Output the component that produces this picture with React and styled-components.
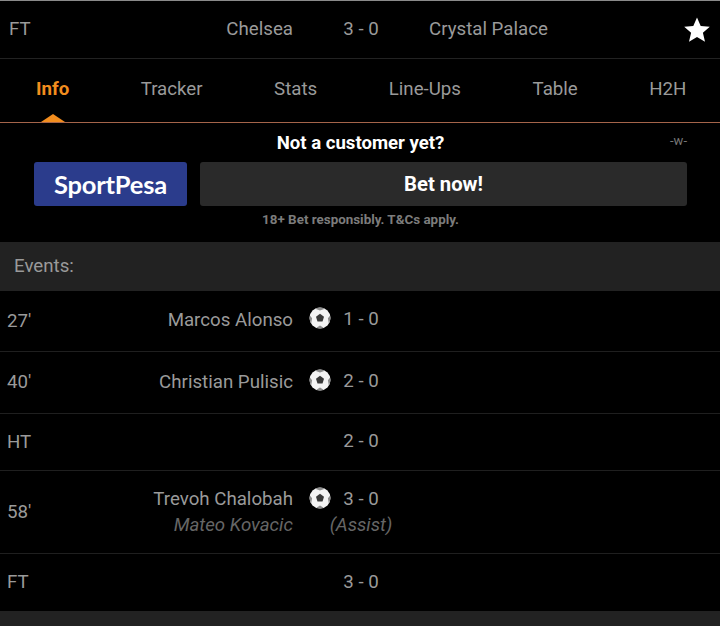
import React from "react";
import styled, { createGlobalStyle } from "styled-components";

const Global = createGlobalStyle`
  html, body { margin: 0; padding: 0; background: #000; }
  body { font-family: Roboto, "Liberation Sans", sans-serif; }
  * { box-sizing: border-box; }
`;

const Page = styled.div`
  width: 720px;
  height: 626px;
  overflow: hidden;
  background: #000;
  color: #9a9a9a;
  font-size: 18.7px;
  border-top: 1px solid #8a8a8a;
`;

const Header = styled.header`
  height: 58px;
  border-bottom: 1px solid #222;
  display: grid;
  grid-template-columns: 100px 193px 50px 36px 50px 1fr 37px;
  align-items: center;
  line-height: 52px;
  padding-bottom: 2px;
`;
const FT = styled.span`padding-left: 9px;`;
const Home = styled.span`text-align: right; white-space: nowrap;`;
const Score = styled.span`text-align: center; white-space: nowrap;`;
const StarWrap = styled.span`display: flex; align-items: center; padding-top: 3px;`;

const Tabs = styled.nav`
  height: 64px;
  display: flex;
  align-items: center;
  border-bottom: 1px solid #a5644a;
  white-space: nowrap;
  padding-left: 0.25px;
`;
const Tab = styled.div`
  position: relative;
  padding: 0 35.75px;
  height: 100%;
  line-height: 60px;
  color: ${p => (p.$active ? "#f28d1e" : "#9a9a9a")};
  font-weight: ${p => (p.$active ? 700 : 400)};
  &::after {
    content: "";
    display: ${p => (p.$active ? "block" : "none")};
    position: absolute;
    left: 50%;
    bottom: 0;
    transform: translateX(-50%);
    border-left: 12px solid transparent;
    border-right: 12px solid transparent;
    border-bottom: 8px solid #f28d1e;
  }
`;

const Ad = styled.section`
  height: 119px;
  padding: 0 33px 0 34px;
  position: relative;
  display: flex;
  flex-direction: column;
`;
const AdTitle = styled.div`
  color: #fff;
  font-weight: 700;
  font-size: 18.6px;
  text-align: center;
  height: 39px;
  line-height: 41px;
`;
const Tiny = styled.span`
  position: absolute;
  right: 33px;
  top: 10px;
  font-size: 13px;
  color: #777;
`;
const AdRow = styled.div`
  display: flex;
  gap: 13px;
  height: 44px;
`;
const Logo = styled.div`
  width: 153px;
  background: #2b3c8c;
  border-radius: 3px;
  color: #fff;
  font-family: Lato, sans-serif;
  font-weight: 700;
  font-size: 25.5px;
  letter-spacing: -0.2px;
  display: flex;
  align-items: center;
  justify-content: center;
`;
const BetButton = styled.div`
  flex: 1;
  background: #2a2a2a;
  border-radius: 3px;
  color: #fff;
  font-weight: 700;
  font-size: 20.3px;
  display: flex;
  align-items: center;
  justify-content: center;
  padding-bottom: 1px;
`;
const Disclaimer = styled.div`
  text-align: center;
  color: #7c7c7c;
  font-weight: 700;
  font-size: 13.4px;
  margin-top: 5px;
  line-height: 17px;
`;

const SectionBar = styled.div`
  height: ${p => p.$h}px;
  background: #222;
  color: #9a9a9a;
  padding-left: 14px;
  line-height: 49px;
`;

const Row = styled.div`
  height: ${p => p.$h}px;
  border-bottom: 1px solid ${p => (p.$last ? "transparent" : "#1f1f1f")};
  display: grid;
  grid-template-columns: 107px 186px 50px 36px;
  align-items: center;
`;
const Time = styled.span`padding-left: 7px; padding-bottom: 1px;`;
const NameCell = styled.div`
  text-align: right;
  white-space: nowrap;
  display: flex;
  flex-direction: column;
  gap: 4px;
  line-height: 22px;
  padding-bottom: ${p => p.$up || 0}px;
`;
const Sub = styled.span`
  font-style: italic;
  color: #666;
`;
const IconCell = styled.div`
  display: flex;
  padding-left: 16px;
  align-self: start;
  margin-top: ${p => p.$top}px;
`;
const ScoreCell = styled.div`
  display: flex;
  flex-direction: column;
  align-items: center;
  gap: 4px;
  line-height: 22px;
  white-space: nowrap;
  padding-bottom: ${p => p.$up || 0}px;
`;

const Star = () => (
  <svg width="28" height="28" viewBox="0 0 28 28">
    <path d="M14 1.500l3.700 8.400 9.100.9-6.900 6 2.100 9-8-4.800-8 4.800 2.100-9-6.900-6 9.100-.9z" fill="#fff" />
  </svg>
);

const Ball = () => (
  <svg width="22" height="22" viewBox="0 0 22 22">
    <circle cx="11" cy="11" r="10.500" fill="#f4f4f4" />
    <path d="M11 6.800l4 2.900-1.500 4.700h-5L7 9.700z" fill="#3a3a3a" />
    <path d="M11 .6c-1.800 0-3.400.4-4.800 1.200L11 3.600l4.800-1.800C14.400 1 12.800.6 11 .6zM.6 11c0 2 .6 3.800 1.600 5.400l.9-5.200L.9 8.600c-.2.8-.3 1.600-.3 2.400zM21.400 11c0-.8-.1-1.600-.3-2.400l-2.200 2.600.9 5.200c1-1.600 1.600-3.400 1.600-5.400zM7.400 20.800c1.100.4 2.300.6 3.600.6s2.500-.2 3.600-.6L11 18.600z" fill="#8c8c8c" />
  </svg>
);

const TABS = ["Info", "Tracker", "Stats", "Line-Ups", "Table", "H2H"];

export default function App() {
  return (
    <Page>
      <Global />
      <Header>
        <FT>FT</FT>
        <Home>Chelsea</Home>
        <span />
        <Score>3 - 0</Score>
        <span />
        <span>Crystal Palace</span>
        <StarWrap><Star /></StarWrap>
      </Header>
      <Tabs>
        {TABS.map((t, i) => <Tab key={t} $active={i === 0}>{t}</Tab>)}
      </Tabs>
      <Ad>
        <AdTitle>Not a customer yet?</AdTitle>
        <Tiny>-w-</Tiny>
        <AdRow>
          <Logo>SportPesa</Logo>
          <BetButton>Bet now!</BetButton>
        </AdRow>
        <Disclaimer>18+ Bet responsibly. T&amp;Cs apply.</Disclaimer>
      </Ad>
      <SectionBar $h={49}>Events:</SectionBar>
      <Row $h={61}>
        <Time>27'</Time>
        <NameCell $up={2}>Marcos Alonso</NameCell>
        <IconCell $top={16}><Ball /></IconCell>
        <ScoreCell $up={4}>1 - 0</ScoreCell>
      </Row>
      <Row $h={62}>
        <Time>40'</Time>
        <NameCell $up={2}>Christian Pulisic</NameCell>
        <IconCell $top={17}><Ball /></IconCell>
        <ScoreCell $up={4}>2 - 0</ScoreCell>
      </Row>
      <Row $h={57}>
        <Time>HT</Time>
        <NameCell />
        <span />
        <ScoreCell $up={2}>2 - 0</ScoreCell>
      </Row>
      <Row $h={83}>
        <Time>58'</Time>
        <NameCell>
          <span>Trevoh Chalobah</span>
          <Sub>Mateo Kovacic</Sub>
        </NameCell>
        <IconCell $top={16}><Ball /></IconCell>
        <ScoreCell>
          <span>3 - 0</span>
          <Sub>(Assist)</Sub>
        </ScoreCell>
      </Row>
      <Row $h={57} $last>
        <Time>FT</Time>
        <NameCell />
        <span />
        <ScoreCell $up={1}>3 - 0</ScoreCell>
      </Row>
      <SectionBar $h={20} />
    </Page>
  );
}
